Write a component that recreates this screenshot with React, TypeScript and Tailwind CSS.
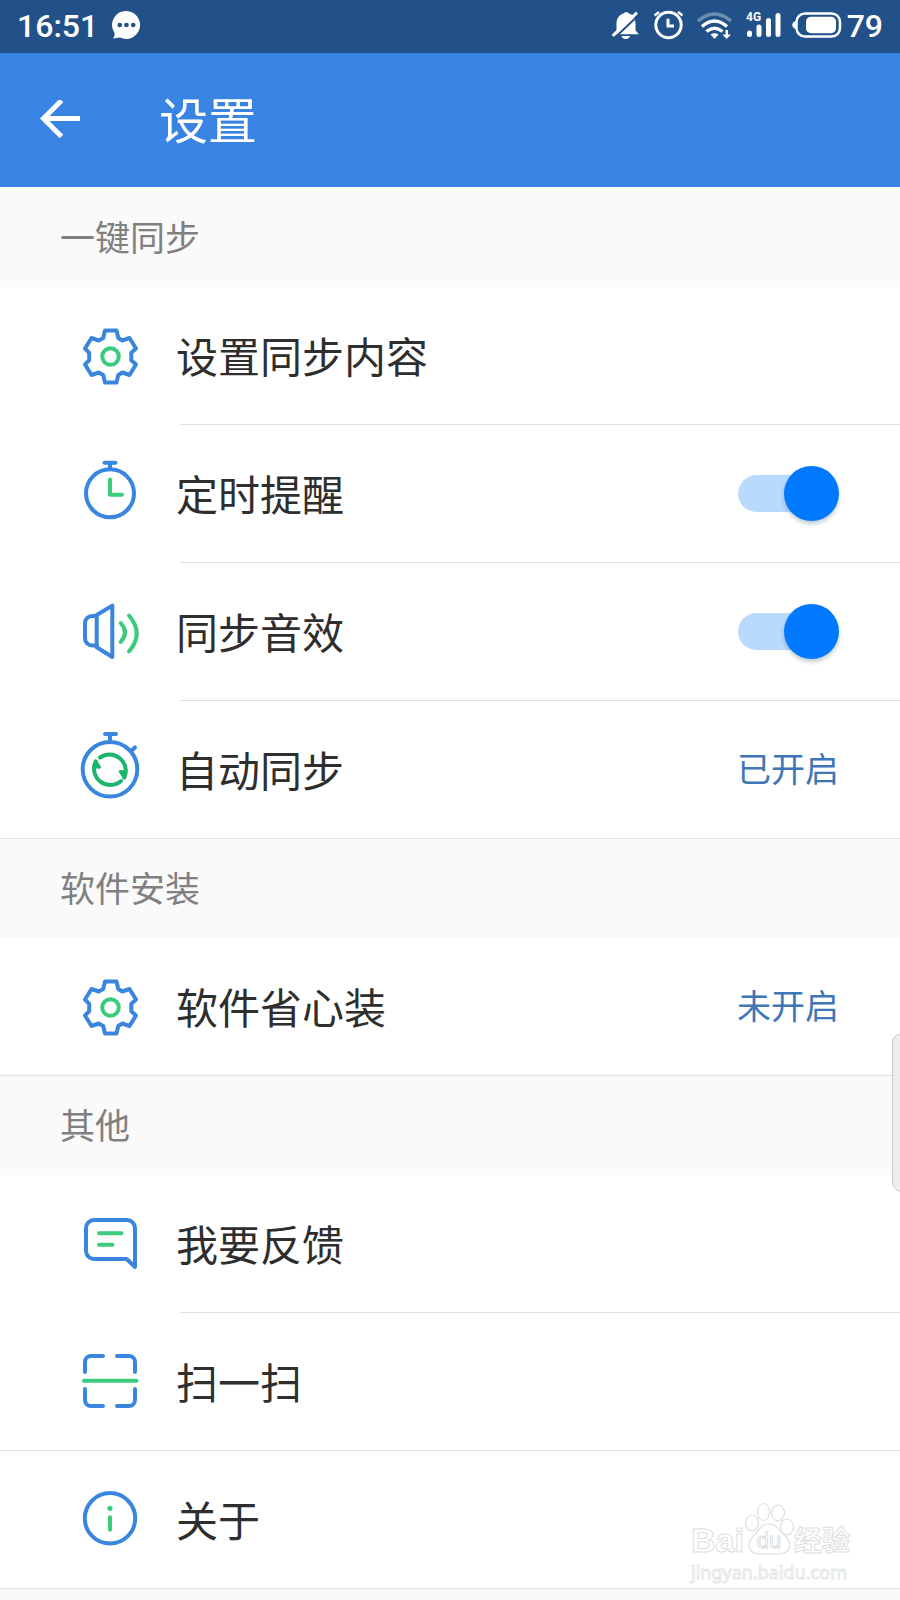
import React from 'react';

type TIcon = 'gear' | 'clock' | 'sound' | 'auto' | 'feedback' | 'scan' | 'info';

interface IRow {
	icon: TIcon;
	label: string;
	value?: string;
	toggle?: boolean;
	wideDivider?: boolean;
}

interface ISection {
	title: string;
	rows: IRow[];
}

const BLUE = '#3a86df';
const GREEN = '#3acb7d';

const SECTIONS: ISection[] = [
	{
		title: '一键同步',
		rows: [
			{ icon: 'gear', label: '设置同步内容' },
			{ icon: 'clock', label: '定时提醒', toggle: true },
			{ icon: 'sound', label: '同步音效', toggle: true },
			{ icon: 'auto', label: '自动同步', value: '已开启' },
		],
	},
	{
		title: '软件安装',
		rows: [{ icon: 'gear', label: '软件省心装', value: '未开启' }],
	},
	{
		title: '其他',
		rows: [
			{ icon: 'feedback', label: '我要反馈' },
			{ icon: 'scan', label: '扫一扫', wideDivider: true },
			{ icon: 'info', label: '关于' },
		],
	},
];

const ICONS: Record<TIcon, React.ReactNode> = {
	gear: (
		<>
			<path d="M31 10.500h11.500l1.800 7.500 4 2.500 7.200-2.500 6.500 10.500-4.700 4.300v7.400L62 44.500l-6.500 10.500-7.200-2.500-4 2.500-1.800 7.500H31l-1.800-7.500-4.500-2.500-7.200 2.500L11 44.500l4.200-4.300v-7.400L11 28.500l6.500-10.500 7.200 2.500 4.500-2.500z" />
			<circle cx="36.500" cy="36.500" r="8.300" stroke={GREEN} />
		</>
	),
	clock: (
		<>
			<circle cx="36" cy="35.300" r="24" />
			<path d="M30.500 4.700h11M36 5v6" />
			<path d="M36 21.500v15.200h12" stroke={GREEN} />
		</>
	),
	sound: (
		<>
			<path d="M22.700 19 38.300 9.600v51.400L22.700 51.300z" />
			<path d="M22.700 20H18a7 7 0 0 0-7 7v15.500a7 7 0 0 0 7 7h4.700" />
			<path d="M46.700 27q8.600 9.500 0 19M55 19.500q15.400 18 0 36" stroke={GREEN} />
		</>
	),
	auto: (
		<>
			<circle cx="36" cy="35.300" r="27.300" />
			<path d="M31 0h11M36 0v8M57 17.300l4-4" />
			<g stroke="#1bb56d">
				<path d="M26 23.500A16.300 16.300 0 0 1 50.300 43.500M47 47A16.300 16.300 0 0 1 21.700 27.500" />
				<path
					d="M50.300 44 46.300 37.500l5.500.500zM21.700 27l3.800 6.300-5.500-.500z"
					fill="#1bb56d"
					strokeWidth="3"
				/>
			</g>
		</>
	),
	feedback: (
		<>
			<path d="M20 12h33a8 8 0 0 1 8 8v39l-8.300-8H20a8 8 0 0 1-8-8V20a8 8 0 0 1 8-8z" />
			<path d="M25 25.300h22.500M25 36.700h13.500" stroke={GREEN} />
		</>
	),
	scan: (
		<>
			<path d="M11 26V16a6 6 0 0 1 6-6h12M43 10h12a6 6 0 0 1 6 6v10M61 43v11a6 6 0 0 1-6 6H43M29 60H17a6 6 0 0 1-6-6V43" />
			<path d="M10 34.700h52.500" stroke={GREEN} />
		</>
	),
	info: (
		<>
			<circle cx="36" cy="34.300" r="25.200" />
			<circle cx="36" cy="24.300" r="2.600" fill={GREEN} stroke="none" />
			<path d="M36 33.300v12.500" stroke={GREEN} />
		</>
	),
};

const RowIcon: React.FC<{ name: TIcon }> = ({ name }) => (
	<svg
		className="size-[72px] shrink-0 overflow-visible"
		viewBox="0 0 72 72"
		fill="none"
		stroke={BLUE}
		strokeWidth="4"
		strokeLinecap="round"
		strokeLinejoin="round"
		aria-hidden="true"
	>
		{ICONS[name]}
	</svg>
);

const StatusBar: React.FC = () => (
	<div className="flex h-[53px] items-center justify-between bg-[#225088] px-[17px] pb-[2px] font-['Roboto',sans-serif] text-[32px] leading-8 font-medium text-white">
		<div className="flex items-center gap-[14px]">
			<span>16:51</span>
			<svg className="h-8 w-[29px]" viewBox="0 0 29 32" aria-hidden="true">
				<path
					d="M14.500 1a14 14 0 1 1-6.500 26.600L1 28.500c1.500-1.500 1.800-3.500 1.300-6A14 14 0 0 1 14.500 1z"
					fill="#fff"
				/>
				<g fill="#225088">
					<circle cx="7.800" cy="15" r="2.300" />
					<circle cx="14.500" cy="15" r="2.300" />
					<circle cx="21.200" cy="15" r="2.300" />
				</g>
			</svg>
		</div>
		<div className="flex items-center gap-[5px]">
			<div className="flex items-center gap-[15px]">
				<svg
					className="h-8 w-[27px] overflow-visible"
					viewBox="0 0 27 32"
					aria-hidden="true"
				>
					<path
						d="M4.500 24.300V14c0-6 3-9.500 7-10.500 1-1.800 4.500-1.800 5.500 0 4 1 6.500 4.500 6.500 10.500v6.500l3.500 3.800zM9.500 26h8.500c-.5 4-8 4-8.500 0z"
						fill="#fff"
					/>
					<path d="M2 28.500 27 4.700" stroke="#225088" strokeWidth="2" />
					<path d="M.7 25.800 25 2.700" stroke="#fff" strokeWidth="3" />
				</svg>
				<svg
					className="h-8 w-[29px]"
					viewBox="0 0 29 32"
					fill="none"
					stroke="#fff"
					strokeWidth="3"
					aria-hidden="true"
				>
					<circle cx="14.500" cy="15" r="12.700" />
					<path d="M14 8.700v7.300h6" />
					<path d="M.5 5.500 5 2M28.500 5.500 24 2" strokeWidth="2.500" />
				</svg>
				<svg
					className="h-8 w-[33px] overflow-visible"
					viewBox="0 0 33 32"
					fill="none"
					stroke="#fff"
					strokeWidth="3.500"
					aria-hidden="true"
				>
					<path d="M0 11q16.500-14 33 0" opacity=".35" />
					<path d="M4 16.500q12.500-11 25 0M8.500 21.500q8-6.500 16 0" />
					<path d="m16.500 29-4-4.500q4-2.500 8 0z" fill="#fff" stroke="none" />
					<path d="M27.500 20h2.500v4.500h3L28.700 29l-4.200-4.500h3z" fill="#fff" stroke="none" />
				</svg>
			</div>
			<svg className="mr-[6px] ml-[10px] h-8 w-[35px]" viewBox="0 0 35 32" aria-hidden="true">
				<text x="0" y="11" fontSize="12" fontWeight="700" fill="#fff">
					4G
				</text>
				<g stroke="#fff" strokeWidth="5" strokeLinecap="round">
					<path d="M3.500 23v1.500M13 17v7.500M22.500 10.500v14M32 5.500v19" />
				</g>
			</svg>
			<svg className="h-8 w-[50px]" viewBox="0 0 50 32" aria-hidden="true">
				<rect
					x="4.500"
					y="3.500"
					width="43.500"
					height="23"
					rx="8.500"
					fill="none"
					stroke="#fff"
					strokeWidth="2.500"
				/>
				<path d="M4 11v8c-5-1-5-7 0-8z" fill="#fff" />
				<rect x="14" y="6.700" width="30" height="16.600" rx="5" fill="#fff" />
			</svg>
			<span>79</span>
		</div>
	</div>
);

const Header: React.FC = () => (
	<header className="flex h-[134px] items-center bg-[#3984e2] pl-10 text-white">
		<button type="button" aria-label="返回">
			<svg
				className="size-10"
				viewBox="0 0 40 40"
				fill="none"
				stroke="currentColor"
				strokeWidth="5"
				aria-hidden="true"
			>
				<path d="M40 18.500H4M21.500.5l-18 18 18 18" />
			</svg>
		</button>
		<h1 className="pb-[6px] pl-[79px] text-[49px] leading-none">设置</h1>
	</header>
);

const Row: React.FC<{ row: IRow; last: boolean }> = ({ row, last }) => {
	const content = (
		<>
			<RowIcon name={row.icon} />
			<span className="grow pb-px text-left text-[42px] leading-none text-[#2e2e2e]">
				{row.label}
			</span>
			{row.value && (
				<span className="pb-[3px] text-[34px] leading-none text-[#3f76b8]">
					{row.value}
				</span>
			)}
		</>
	);
	const rowClass = 'flex h-[137px] w-full items-center gap-[30px] pr-[61px] pl-[74px]';

	return (
		<li>
			{row.toggle ? (
				<label className={rowClass}>
					{content}
					<input
						type="checkbox"
						role="switch"
						defaultChecked
						className="relative h-[55px] w-[101px] shrink-0 appearance-none
						before:absolute before:top-[9px] before:left-0 before:h-[37px] before:w-[84px]
						before:rounded-full before:bg-gray-200 checked:before:bg-[#b9d9fd]
						after:absolute after:top-0 after:left-0 after:size-[55px] after:rounded-full
						after:bg-gray-400 after:shadow-[0_3px_4px_rgba(0,60,80,0.25)]
						checked:after:left-[46px] checked:after:bg-[#0079ff]"
					/>
				</label>
			) : (
				<button type="button" className={rowClass}>
					{content}
				</button>
			)}
			{!last && (
				<hr
					className={`border-t border-[#e0e0e0] ${row.wideDivider ? '' : 'ml-[180px]'}`}
				/>
			)}
		</li>
	);
};

const Section: React.FC<{ section: ISection; first: boolean }> = ({ section, first }) => (
	<section>
		<h2
			className={`flex h-[100px] items-center border-t bg-[#fafafa] pb-[5px] pl-[60px]
			text-[35px] leading-none text-[#808080]
			${first ? 'border-transparent' : 'border-[#e0e0e0]'}`}
		>
			{section.title}
		</h2>
		<ul>
			{section.rows.map((row, i) => (
				<Row key={row.label} row={row} last={i === section.rows.length - 1} />
			))}
		</ul>
	</section>
);

const Watermark: React.FC = () => (
	<div className="pointer-events-none absolute right-[50px] bottom-4 text-white select-none [-webkit-text-stroke:1px_#dedede]">
		<div className="flex items-end font-['Liberation_Sans','Noto_Sans_CJK_SC',sans-serif] leading-none font-bold">
			<span className="text-[34px] leading-10">Bai</span>
			<div className="relative mb-1 h-[54px] w-[50px]">
				<svg
					className="size-full overflow-visible"
					viewBox="0 0 50 54"
					fill="#fff"
					stroke="#dedede"
					strokeWidth="1.200"
					aria-hidden="true"
				>
					<ellipse cx="8" cy="21" rx="6.500" ry="8" />
					<ellipse cx="19.500" cy="10" rx="6" ry="8.500" />
					<ellipse cx="34" cy="11" rx="6.500" ry="8" />
					<ellipse cx="43" cy="25" rx="6.500" ry="8" />
					<path d="M25 22c7 0 9 5 13 9 5 4 9 8 7.500 14-2 8-12 7-20.500 7s-17 1-19.500-6C3.500 39 8 35 12 31c4-4 6-9 13-9z" />
				</svg>
				<span className="absolute inset-x-0 bottom-1 text-center text-[22px] font-normal">
					du
				</span>
			</div>
			<span className="mb-1 text-[28px]">经验</span>
		</div>
		<div className="font-['Noto_Sans',sans-serif] text-[18px] leading-6 [-webkit-text-stroke:1px_#e6e6e6]">
			jingyan.baidu.com
		</div>
	</div>
);

const App: React.FC = () => (
	<div className="relative min-h-screen overflow-hidden bg-[#fafafa] font-['Noto_Sans_CJK_SC',sans-serif]">
		<StatusBar />
		<Header />
		<main className="border-b border-[#e0e0e0] bg-white">
			{SECTIONS.map((section, i) => (
				<Section key={section.title} section={section} first={i === 0} />
			))}
		</main>
		{/* edge handle of the system side panel */}
		<div className="absolute top-[1033px] -right-3 h-[159px] w-5 rounded-xl border border-[#c8c8c8] bg-[#ebebeb]/90" />
		<Watermark />
	</div>
);

export default App;
